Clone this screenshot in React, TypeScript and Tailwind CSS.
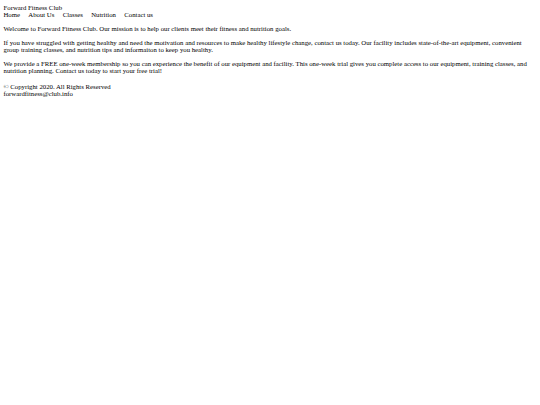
import React from "react";

export default function App() {
  return (
    <div className="min-h-[405px] bg-white px-[3.5px] pt-[4px] text-[6.75px] leading-[7px] text-black" style={{ fontFamily: '"Liberation Serif", "Times New Roman", serif' }}>
      <header>
        <div>Forward Fitness Club</div>
        <nav className="flex gap-[8.3px]">
          <span>Home</span>
          <span>About Us</span>
          <span>Classes</span>
          <span>Nutrition</span>
          <span>Contact us</span>
        </nav>
      </header>
      <main>
        <p className="my-[7px]">Welcome to Forward Fitness Club. Our mission is to help our clients meet their fitness and nutrition goals.</p>
        <p className="my-[7px]">If you have struggled with getting healthy and need the motivation and resources to make healthy lifestyle change, contact us today. Our facility includes state-of-the-art equipment, convenient group training classes, and nutrition tips and informaiton to keep you healthy.</p>
        <p className="my-[7px]">We provide a FREE one-week membership so you can experience the benefit of our equipment and facility. This one-week trial gives you complete access to our equipment, training classes, and nutrition planning. Contact us today to start your free trial!</p>
      </main>
      <footer className="mt-[8.5px]">
        <div>© Copyright 2020. All Rights Reserved</div>
        <div>forwardfitness@club.info</div>
      </footer>
    </div>
  );
}
